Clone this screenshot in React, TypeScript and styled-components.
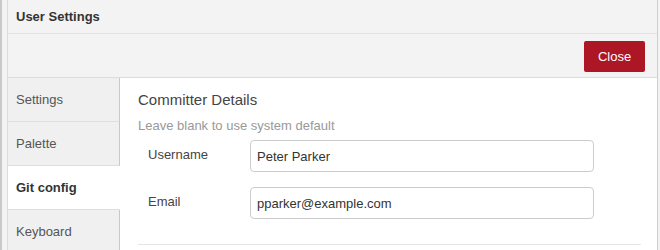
import React from "react";
import styled, { createGlobalStyle } from "styled-components";

const GlobalStyle = createGlobalStyle`
  html, body {
    margin: 0;
    padding: 0;
    background: #f3f3f3;
    font-family: "Liberation Sans", Arial, sans-serif;
  }
`;

const tabs = ["Settings", "Palette", "Git config", "Keyboard"];

const App = () => {
  return (
    <>
      <GlobalStyle />
      <Page>
        <Dialog>
          <Header>User Settings</Header>

          <Toolbar>
            <CloseButton>Close</CloseButton>
          </Toolbar>

          <Body>
            <TabList>
              {tabs.map((t) => (
                <Tab key={t} $active={t === "Git config"}>
                  {t}
                </Tab>
              ))}
              <TabFill />
            </TabList>

            <Content>
              <SectionTitle>Committer Details</SectionTitle>
              <Hint>Leave blank to use system default</Hint>

              <FieldRow>
                <FieldLabel>Username</FieldLabel>
                <TextInput defaultValue="Peter Parker" />
              </FieldRow>

              <FieldRow>
                <FieldLabel>Email</FieldLabel>
                <TextInput defaultValue="pparker@example.com" />
              </FieldRow>

              <Divider />
            </Content>
          </Body>
        </Dialog>
      </Page>
    </>
  );
};

const Page = styled.div`
  height: 250px;
  overflow: hidden;

  display: flex;
  padding-left: 5px;
  padding-right: 2px;

  border-left: 2px solid #c9c9c9;
`;

const Dialog = styled.div`
  flex-grow: 1;

  display: flex;
  flex-direction: column;

  border-left: 1px solid #dcdcdc;
  border-right: 1px solid #cfcfcf;
  background: #f3f3f3;
`;

const Header = styled.div`
  flex-shrink: 0;
  height: 33px;
  padding-left: 8px;

  display: flex;
  align-items: center;

  border-bottom: 1px solid #e2e2e2;

  color: #333;
  font-size: 13px;
  font-weight: bold;
`;

const Toolbar = styled.div`
  flex-shrink: 0;
  height: 43px;
  padding-right: 12px;

  display: flex;
  align-items: center;
  justify-content: flex-end;

  border-bottom: 1px solid #dcdcdc;
`;

const CloseButton = styled.button`
  width: 61px;
  height: 31px;
  margin-top: 1px;

  border: none;
  border-radius: 2px;
  background: #ad1625;

  color: #fff;
  font-family: "Liberation Sans", Arial, sans-serif;
  font-size: 13px;
`;

const Body = styled.div`
  flex-grow: 1;
  min-height: 0;
  overflow: hidden;
  display: flex;
`;

const TabList = styled.div`
  flex-shrink: 0;
  width: 112px;

  display: flex;
  flex-direction: column;
`;

const Tab = styled.div<{ $active?: boolean }>`
  flex-shrink: 0;
  box-sizing: border-box;
  height: 44px;
  padding-left: 8px;

  display: flex;
  align-items: center;

  border-bottom: 1px solid #dedede;
  border-right: 1px solid ${(p) => (p.$active ? "#fff" : "#c8c8c8")};
  background: ${(p) => (p.$active ? "#fff" : "#f0f0f0")};

  color: ${(p) => (p.$active ? "#333" : "#555")};
  font-size: 13px;
  font-weight: ${(p) => (p.$active ? "bold" : "normal")};
`;

const TabFill = styled.div`
  flex-grow: 1;
  border-right: 1px solid #c8c8c8;
  background: #f0f0f0;
`;

const Content = styled.div`
  flex-grow: 1;
  padding: 12px 16px 0 18px;
  background: #fff;
`;

const SectionTitle = styled.div`
  line-height: 20px;
  color: #444;
  font-size: 15px;
`;

const Hint = styled.div`
  margin-top: 7px;
  line-height: 17px;
  color: #999;
  font-size: 13px;
`;

const FieldRow = styled.div`
  margin-top: 6px;
  padding-left: 10px;

  display: flex;
  align-items: flex-start;

  & + & {
    margin-top: 15px;
  }
`;

const FieldLabel = styled.div`
  width: 102px;
  padding-top: 7px;

  color: #444;
  font-size: 13px;
  line-height: 15px;
`;

const TextInput = styled.input`
  box-sizing: border-box;
  width: 344px;
  height: 32px;
  padding: 0 6px;

  border: 1px solid #ccc;
  border-radius: 4px;
  outline: none;

  color: #333;
  font-family: "Liberation Sans", Arial, sans-serif;
  font-size: 13px;
`;

const Divider = styled.div`
  margin-top: 25px;
  height: 1px;
  background: #e5e5e5;
`;

export default App;
